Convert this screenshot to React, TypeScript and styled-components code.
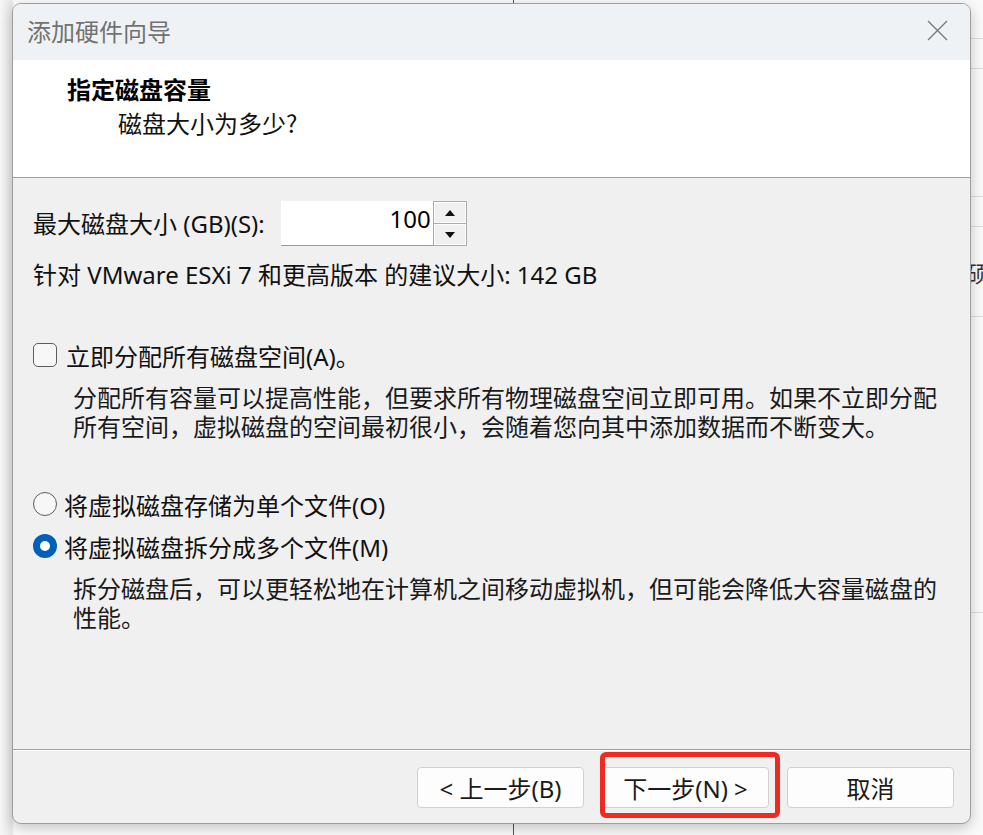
import styled, { createGlobalStyle } from "styled-components";

const GlobalStyle = createGlobalStyle`
    body {
        margin: 0;
        background: #f6f6f6;
        font-family: "Noto Sans", "Noto Sans CJK SC", sans-serif;
    }
    * {
        box-sizing: border-box;
    }
`

const Desktop = styled.div`
    position: relative;
    width: 983px;
    height: 835px;
    overflow: hidden;
    padding: 3px 12px 0 12px;
    background: linear-gradient(90deg, #f7f7f7 0, #e6e6e6 12px, #fbfbfb 14px);
`

const BackWindow = styled.div`
    position: absolute;
    left: 513px;
    top: -6px;
    width: 480px;
    height: 860px;
    border-left: 1px solid #555;
    border-top: 1px solid #b8b8b8;
    background: #fafafa;
    display: flex;
    flex-direction: column;
`

const BackRow = styled.div<{ $h: number }>`
    height: ${p => p.$h}px;
    flex: none;
    border-bottom: 1px solid #dcdcdc;
    display: flex;
    align-items: center;
    justify-content: flex-end;
    padding-right: 4px;
    font-family: "Noto Sans CJK SC", serif;
    font-size: 22px;
    color: #333;
    overflow: hidden;
    white-space: nowrap;
`

const Dialog = styled.div`
    position: relative;
    z-index: 1;
    width: 959px;
    height: 821px;
    border: 1px solid #9e9e9e;
    border-radius: 9px;
    overflow: hidden;
    display: flex;
    flex-direction: column;
    background: #f0f0f0;
    box-shadow: 0 4px 14px rgba(0, 0, 0, 0.22);
`

const TitleBar = styled.div`
    height: 56px;
    flex: none;
    display: flex;
    align-items: center;
    justify-content: space-between;
    padding: 0 22px 4px 14px;
    background: #eef2f4;
`

const TitleText = styled.div`
    font-family: "Noto Sans CJK SC", sans-serif;
    font-size: 24px;
    color: #727272;
`

const CloseButton = styled.button`
    width: 22px;
    height: 22px;
    padding: 0;
    border: none;
    background: none;
    display: flex;
    align-items: center;
    justify-content: center;
`

const Header = styled.div`
    height: 118px;
    flex: none;
    background: #fff;
    border-bottom: 1px solid #a0a0a0;
    padding-top: 12px;
`

const HeaderTitle = styled.div`
    padding-left: 54px;
    font-family: "Noto Sans CJK SC", sans-serif;
    font-weight: 700;
    font-size: 24px;
    line-height: 34px;
    color: #000;
`

const HeaderSub = styled.div`
    padding-left: 105px;
    font-family: "Noto Sans CJK SC", sans-serif;
    font-size: 24px;
    line-height: 34px;
    color: #111;
`

const Body = styled.div`
    flex: 1;
    padding: 23px 30px 0 20px;
    color: #111;
    font-size: 24px;
`

const SizeRow = styled.div`
    display: flex;
    align-items: center;
    height: 45px;
`

const Label = styled.span`
    margin-right: 16px;
    line-height: 32px;
`

const Spinner = styled.div`
    display: flex;
    height: 45px;
`

const SpinInput = styled.div`
    width: 152px;
    height: 45px;
    background: #fff;
    border-bottom: 1px solid #9a9a9a;
    text-align: right;
    padding-right: 2px;
    line-height: 36px;
    font-size: 24px;
    color: #000;
`

const SpinButtons = styled.div`
    width: 34px;
    display: flex;
    flex-direction: column;
    gap: 1px;
    border: 1px solid #ababab;
    background: #ababab;
`

const SpinButton = styled.div`
    flex: 1;
    background: #f0f0f0;
    border: 1px solid #fdfdfd;
    display: flex;
    align-items: center;
    justify-content: center;
`

const Line = styled.div<{ $top: number }>`
    margin-top: ${p => p.$top}px;
    line-height: 32px;
`

const OptionRow = styled.div<{ $top: number }>`
    margin-top: ${p => p.$top}px;
    display: flex;
    align-items: center;
    height: 32px;
`

const CheckBox = styled.span`
    width: 24px;
    height: 24px;
    flex: none;
    border: 1.5px solid #5c5c5c;
    border-radius: 5px;
    background: #f7f7f7;
    margin-right: 9px;
`

const Radio = styled.span<{ $checked?: boolean }>`
    width: 24px;
    height: 24px;
    flex: none;
    border-radius: 50%;
    margin-right: 7px;
    display: flex;
    align-items: center;
    justify-content: center;
    border: ${p => (p.$checked ? "none" : "1.5px solid #5c5c5c")};
    background: ${p => (p.$checked ? "#005fb8" : "#f7f7f7")};

    &::after {
        content: "";
        display: ${p => (p.$checked ? "block" : "none")};
        width: 10px;
        height: 10px;
        border-radius: 50%;
        background: #fff;
    }
`

const Description = styled.div`
    margin-top: 12px;
    padding-left: 40px;
    width: 912px;
    line-height: 29px;
    color: #1a1a1a;
`

const Footer = styled.div`
    height: 74px;
    flex: none;
    border-top: 1px solid #a0a0a0;
    box-shadow: inset 0 1px 0 #fff;
    display: flex;
    justify-content: flex-end;
    gap: 18px;
    padding: 17px 16px 0 0;
`

const Button = styled.button`
    width: 167px;
    height: 41px;
    background: #fdfdfd;
    border: 1px solid #d0d0d0;
    border-radius: 4px;
    font-family: "Noto Sans", "Noto Sans CJK SC", sans-serif;
    font-size: 24px;
    color: #1a1a1a;
    padding: 0;
`

const Highlight = styled.div`
    position: absolute;
    left: 587px;
    top: 748px;
    width: 180px;
    height: 66px;
    border: 5px solid #ee2a22;
    border-radius: 6px;
    pointer-events: none;
`

const Arrow = ({ down }: { down?: boolean }) => (
    <svg width="10" height="6" viewBox="0 0 10 6">
        <polygon points={down ? "0,0 10,0 5,6" : "0,6 10,6 5,0"} fill="#111" />
    </svg>
)

const App = () => {
    return (
        <Desktop>
            <GlobalStyle />
            <BackWindow>
                <BackRow $h={44} />
                <BackRow $h={30} />
                <BackRow $h={128} />
                <BackRow $h={30} />
                <BackRow $h={90}>硕</BackRow>
                <BackRow $h={296} />
            </BackWindow>
            <Dialog>
                <TitleBar>
                    <TitleText>添加硬件向导</TitleText>
                    <CloseButton>
                        <svg width="21" height="21" viewBox="0 0 21 21">
                            <path d="M1 1 L20 20 M20 1 L1 20" stroke="#7a7a7a" strokeWidth="1.4" />
                        </svg>
                    </CloseButton>
                </TitleBar>
                <Header>
                    <HeaderTitle>指定磁盘容量</HeaderTitle>
                    <HeaderSub>磁盘大小为多少?</HeaderSub>
                </Header>
                <Body>
                    <SizeRow>
                        <Label>最大磁盘大小 (GB)(S):</Label>
                        <Spinner>
                            <SpinInput>100</SpinInput>
                            <SpinButtons>
                                <SpinButton><Arrow /></SpinButton>
                                <SpinButton><Arrow down /></SpinButton>
                            </SpinButtons>
                        </Spinner>
                    </SizeRow>
                    <Line $top={13}>针对 VMware ESXi 7 和更高版本 的建议大小: 142 GB</Line>
                    <OptionRow $top={48}>
                        <CheckBox />
                        立即分配所有磁盘空间(A)。
                    </OptionRow>
                    <Description>
                        分配所有容量可以提高性能，但要求所有物理磁盘空间立即可用。如果不立即分配所有空间，虚拟磁盘的空间最初很小，会随着您向其中添加数据而不断变大。
                    </Description>
                    <OptionRow $top={47}>
                        <Radio />
                        将虚拟磁盘存储为单个文件(O)
                    </OptionRow>
                    <OptionRow $top={10}>
                        <Radio $checked />
                        将虚拟磁盘拆分成多个文件(M)
                    </OptionRow>
                    <Description>
                        拆分磁盘后，可以更轻松地在计算机之间移动虚拟机，但可能会降低大容量磁盘的性能。
                    </Description>
                </Body>
                <Footer>
                    <Button>&lt; 上一步(B)</Button>
                    <Button>下一步(N) &gt;</Button>
                    <Button>取消</Button>
                </Footer>
                <Highlight />
            </Dialog>
        </Desktop>
    )
}

export default App;
